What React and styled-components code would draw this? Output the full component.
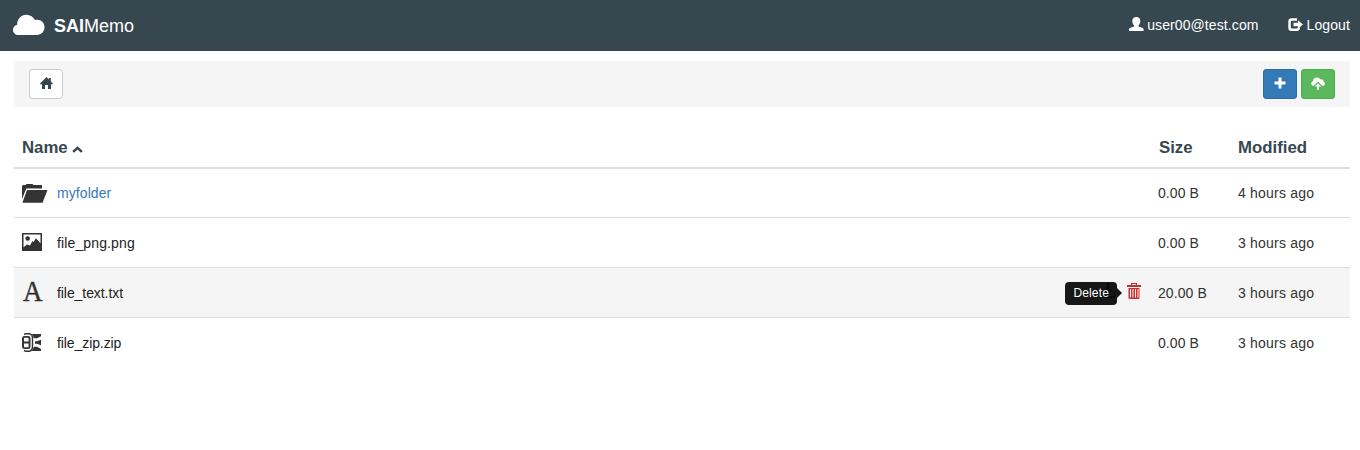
import React from "react";
import styled, { createGlobalStyle } from "styled-components";

const GlobalStyle = createGlobalStyle`
  * { box-sizing: border-box; }
  body {
    margin: 0;
    background: #fff;
    color: #333;
    font: 14px/20px "Liberation Sans", Arial, sans-serif;
  }
`;

const Header = styled.header`
  display: flex;
  align-items: center;
  justify-content: space-between;
  height: 51px;
  padding: 0 10px 0 13px;
  background: #37474f;
  color: #fff;
`;

const Brand = styled.div`
  display: flex;
  align-items: center;
  gap: 9px;
  font-size: 18px;

  svg { margin-top: -2px; }
`;

const HeaderLinks = styled.nav`
  display: flex;
  gap: 29.5px;
  padding-bottom: 2px;
`;

const HeaderLink = styled.a`
  display: flex;
  align-items: center;
  gap: 3.500px;
  color: #fff;
  letter-spacing: 0.1px;
`;

const Glyph = styled.svg`
  display: block;
  flex: none;
  fill: currentColor;
`;

const Toolbar = styled.div`
  display: flex;
  align-items: center;
  justify-content: space-between;
  height: 46px;
  margin: 10px 10px 20px 14px;
  padding: 0 15px;
  border-radius: 4px;
  background: #f5f5f5;
`;

const ButtonGroup = styled.div`
  display: flex;
  gap: 4px;
`;

const tones = {
  plain: { bg: "#fff", border: "#ccc", ink: "#37474f" },
  primary: { bg: "#337ab7", border: "#2e6da4", ink: "#fff" },
  success: { bg: "#5cb85c", border: "#4cae4c", ink: "#fff" },
};

const Button = styled.button`
  display: flex;
  align-items: center;
  justify-content: center;
  width: 34px;
  height: 30px;
  padding: 0 0 2px;
  border: 1px solid ${(p) => tones[p.$tone].border};
  border-radius: 3px;
  background: ${(p) => tones[p.$tone].bg};
  color: ${(p) => tones[p.$tone].ink};
`;

const Table = styled.div`
  margin: 0 10px 0 14px;
`;

const Row = styled.div`
  display: grid;
  grid-template-columns: 1fr 80px 120px;
  align-items: center;
  height: ${(p) => (p.$first ? 49 : 50)}px;
  border-bottom: 1px solid ${(p) => (p.$last ? "transparent" : "#ddd")};
  background: ${(p) => (p.$active ? "#f5f5f5" : "transparent")};
`;

const HeadRow = styled(Row)`
  height: 42px;
  padding-top: 1px;
  border-bottom: 2px solid #ddd;
  color: #37474f;
  font-size: 16.8px;
  font-weight: bold;
`;

const HeadCell = styled.div`
  display: flex;
  align-items: center;
  gap: 4px;
  padding-left: ${(p) => p.$indent}px;

  svg { margin-top: 4px; }
`;

const NameCell = styled.div`
  display: flex;
  align-items: center;
  justify-content: space-between;
  padding: 0 9px 0 8px;
`;

const FileLabel = styled.div`
  display: flex;
  align-items: center;
  color: ${(p) => (p.$folder ? "#337ab7" : "#222")};
  letter-spacing: ${(p) => p.$tracking}px;
`;

const IconSlot = styled.span`
  display: flex;
  align-items: center;
  width: 35px;
  height: 24px;
  margin-top: ${(p) => (p.$raised ? -2 : 0)}px;
  color: #333;
`;

const LetterIcon = styled.span`
  padding: 0 0 2px 1px;
  font: 29px/24px "Liberation Serif", serif;
  transform: scaleX(0.93);
  transform-origin: left;
  -webkit-text-stroke: 0.4px #333;
`;

const Cell = styled.div`
  padding-left: 8px;
  letter-spacing: ${(p) => p.$tracking || 0}px;
`;

const Actions = styled.div`
  position: relative;
  display: flex;
  gap: 12px;
  margin-top: -3px;
`;

const ActionIcon = styled.span`
  display: flex;
  color: ${(p) => (p.$danger ? "#c9302c" : "#337ab7")};
`;

const Tooltip = styled.span`
  position: absolute;
  right: 24px;
  top: -1px;
  height: 23px;
  padding: 3px 8px;
  border-radius: 4px;
  background: #000;
  color: #fff;
  font-size: 12px;
  line-height: 17px;
  letter-spacing: 0.15px;
  opacity: 0.9;

  &::after {
    content: "";
    position: absolute;
    left: 100%;
    top: 6px;
    border: solid transparent;
    border-width: 5px 0 5px 5px;
    border-left-color: #000;
  }
`;

const Icon = ({ w, h, children }) => (
  <Glyph width={w} height={h} viewBox={`0 0 ${w} ${h}`} aria-hidden="true">
    {children}
  </Glyph>
);

const CloudIcon = () => (
  <Icon w={32} h={22}>
    <path d="M5.500 21C2.300 21 0 18.900 0 16c0-2.700 1.700-4.700 4.200-5.300C4 5.200 7.900.7 13.400.7c3.900 0 7 2.100 8.500 5.400 5-1.500 9.600 1.900 9.600 7 0 4.500-3.300 7.900-7.600 7.900z" />
  </Icon>
);

const UserIcon = () => (
  <Icon w={15} h={16}>
    <path d="M7.300 0c2.500 0 4 1.600 4 4 0 1.800-.7 3.300-1.700 4.200v1.200l4.200 1.700c.5.300.8.700.8 1.300V14H0v-1.600c0-.6.300-1 .8-1.300L5 9.400V8.200C4 7.300 3.300 5.800 3.300 4c0-2.400 1.500-4 4-4z" />
  </Icon>
);

const LogoutIcon = () => (
  <Icon w={15} h={14}>
    <path d="M3.500.2H9v2.500H4Q2.800 2.700 2.800 4v5Q2.800 10.400 4 10.400h4.500Q9.500 10.400 9.500 9.500H12q0 3.500-3.200 3.500H3.500Q.3 13 .3 9.700V3.500Q.3.200 3.500.2z" />
    <path d="M10 2.300 15 6.500 10 10.700V8.300H5.500V4.700H10z" />
  </Icon>
);

const HomeIcon = () => (
  <Icon w={14} h={14}>
    <path d="M7.500 1l2.300 2.400V2h2v3.300L14 7.700l-.4.600H12V13H9V9H6v4H3V8.300H1.200L.8 7.700z" />
  </Icon>
);

const PlusIcon = () => (
  <Icon w={12} h={12}>
    <path d="M4.500.5h3v4h4v3h-4v4h-3v-4h-4v-3h4z" />
  </Icon>
);

const CloudUploadIcon = () => (
  <Icon w={14} h={13}>
    <path d="M2.500 9C1 8.800.2 7.800.2 6.600c0-1.200.8-2 1.700-2.300C2.100 1.600 3.800.4 5.900.4c1.600 0 2.800.7 3.500 2 2.200-.2 3.100.8 3.200 2 .8.400 1.200 1.100 1.200 2 0 1.300-.8 2.400-2.300 2.600L7 4.500z" />
    <path d="M7 6.200 10.200 9.400H8v3.300H6V9.400H3.800z" />
  </Icon>
);

const CaretIcon = () => (
  <Icon w={11} h={7}>
    <path d="M5.500.2 10.700 5 9 6.800 5.500 3.600 2 6.800.3 5z" />
  </Icon>
);

const FolderIcon = () => (
  <Icon w={26} h={19}>
    <path d="M0 15V2l1-1h2.500L4.500 0h6l1 1H20v3.500H4.300z" />
    <path d="M5 6h20.500l-5 12.700H.4z" />
  </Icon>
);

const PictureIcon = () => (
  <Icon w={20} h={18}>
    <path
      fillRule="evenodd"
      d="M0 0h20v18H0zM1.500 1.500v12.700L5 11.500l3 1 2.500-4.500 1 1L14 5.200l4.500 5V1.500z"
    />
    <circle cx="5.700" cy="5.500" r="2.300" />
  </Icon>
);

const ZipIcon = () => (
  <Icon w={20} h={19}>
    <path
      fillRule="evenodd"
      d="M2.500 3h3.700Q8.500 3 8.500 5.300v8.400Q8.500 16 6.200 16H2.500Q0 16 0 13.700V5.300Q0 3 2.500 3zM2 5.300v3.200h4.600V5.300q0-.5-.5-.5H2.500q-.5 0-.5.500zm0 5.200v3.200q0 .5.500.5h3.600q.5 0 .5-.5v-3.200z"
    />
    <path
      fill="none"
      stroke="currentColor"
      strokeWidth="1.400"
      d="M2 1.500 4 .7h3.500Q10.500 1.600 10.500 5v9q0 3.400-3 4.300H4L2 17.500"
    />
    <path d="M9.500 1H19v2.200l-4 2h-3.200Q11.300 2.500 9.500 1zM13 8.300h2l4-1.600v5.600L15 10.700h-2zM11.800 13.800H15l4 2.300V18H9.500q1.800-1.500 2.300-4.200z" />
  </Icon>
);

const DownloadIcon = () => (
  <Icon w={14} h={17}>
    <path d="M5.500 0h3v6H12l-5 5-5-5h3.500zM0 9h1.500v4h11V9H14v6H0z" />
  </Icon>
);

const TrashIcon = () => (
  <Icon w={14} h={17}>
    <path d="M4 0h6v2h4v2H0V2h4zm1.200 1v1h3.600V1z" fillRule="evenodd" />
    <path
      fillRule="evenodd"
      d="M1.500 5h11v9.500q0 1.500-1.500 1.500H3q-1.500 0-1.500-1.500zM3 6v8.500h1.100V6zm2.500 0v8.500h1V6zm2.500 0v8.500h1V6zm2.500 0v8.500h1V6z"
    />
  </Icon>
);

const icons = {
  folder: <FolderIcon />,
  picture: <PictureIcon />,
  text: <LetterIcon>A</LetterIcon>,
  zip: <ZipIcon />,
};

const files = [
  { name: "myfolder", kind: "folder", size: "0.00 B", modified: "4 hours ago", tracking: 0.08 },
  { name: "file_png.png", kind: "picture", size: "0.00 B", modified: "3 hours ago", tracking: 0.13 },
  { name: "file_text.txt", kind: "text", size: "20.00 B", modified: "3 hours ago", tracking: -0.07, active: true },
  { name: "file_zip.zip", kind: "zip", size: "0.00 B", modified: "3 hours ago", tracking: -0.09 },
];

export default function App() {
  return (
    <>
      <GlobalStyle />
      <Header>
        <Brand>
          <CloudIcon />
          <span><b>SAI</b>Memo</span>
        </Brand>
        <HeaderLinks>
          <HeaderLink><UserIcon />user00@test.com</HeaderLink>
          <HeaderLink><LogoutIcon />Logout</HeaderLink>
        </HeaderLinks>
      </Header>
      <Toolbar>
        <Button $tone="plain" aria-label="Home"><HomeIcon /></Button>
        <ButtonGroup>
          <Button $tone="primary" aria-label="Add"><PlusIcon /></Button>
          <Button $tone="success" aria-label="Upload"><CloudUploadIcon /></Button>
        </ButtonGroup>
      </Toolbar>
      <Table>
        <HeadRow>
          <HeadCell $indent={8}>Name<CaretIcon /></HeadCell>
          <HeadCell $indent={9}>Size</HeadCell>
          <HeadCell $indent={8}>Modified</HeadCell>
        </HeadRow>
        {files.map((file, i) => (
          <Row
            key={file.name}
            $active={file.active}
            $first={i === 0}
            $last={i === files.length - 1}
          >
            <NameCell>
              <FileLabel $folder={file.kind === "folder"} $tracking={file.tracking}>
                <IconSlot $raised={file.kind === "picture" || file.kind === "text"}>
                  {icons[file.kind]}
                </IconSlot>
                {file.name}
              </FileLabel>
              {file.active && (
                <Actions>
                  <ActionIcon><DownloadIcon /></ActionIcon>
                  <ActionIcon $danger><TrashIcon /></ActionIcon>
                  <Tooltip>Delete</Tooltip>
                </Actions>
              )}
            </NameCell>
            <Cell $tracking={0.08}>{file.size}</Cell>
            <Cell $tracking={0.2}>{file.modified}</Cell>
          </Row>
        ))}
      </Table>
    </>
  );
}
